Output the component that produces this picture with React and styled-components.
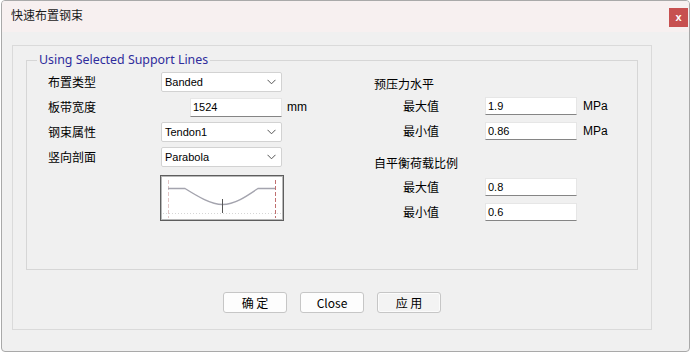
import React from 'react';
import styled, { createGlobalStyle } from 'styled-components';

const Global = createGlobalStyle`
  html, body { margin: 0; padding: 0; background: #ffffff; }
  body { font-family: "Noto Sans CJK SC", "Noto Sans", sans-serif; color: #000; }
`;

const Window = styled.div`
  box-sizing: border-box;
  margin-left: 1px;
  width: 689px;
  height: 352px;
  border: 1px solid #a9a9a9;
  border-radius: 4px;
  background: #f0f0f0;
  overflow: hidden;
  display: flex;
  flex-direction: column;
`;

const TitleBar = styled.div`
  height: 31px;
  flex: none;
  background: #f7f0f0;
  display: flex;
  justify-content: space-between;
  align-items: flex-start;
  padding-left: 9px;
`;

const TitleText = styled.span`
  margin-top: 6px;
  font: 12px/16px "Noto Sans CJK SC", sans-serif;
  color: #1a1a1a;
`;

const CloseBtn = styled.div`
  margin-top: 7px;
  margin-right: 1px;
  width: 19px;
  height: 19px;
  background: #c75050;
  color: #fff;
  font: bold 11px/18px "Liberation Sans", sans-serif;
  text-align: center;
`;

const Panel = styled.div`
  box-sizing: border-box;
  margin: 13px 0 0 10px;
  width: 640px;
  height: 285px;
  border: 1px solid #dadada;
  padding: 0 13px;
  display: flex;
  flex-direction: column;
`;

const Group = styled.fieldset`
  margin: 6px 0 0 0;
  padding: 0;
  border: 1px solid #d6d6d6;
  min-width: 0;
`;

const Legend = styled.legend`
  margin-left: 10px;
  padding: 0 2px;
  font: 12.4px/16px "Noto Sans", sans-serif;
  color: #2f2c9c;
`;

const GroupBody = styled.div`
  box-sizing: border-box;
  height: 201px;
  padding-left: 21px;
  display: grid;
  grid-template-columns: 326px 1fr;
  align-items: start;
`;

const LeftCol = styled.div`
  padding-top: 4px;
  display: grid;
  grid-template-columns: 113px 121px auto;
  grid-template-rows: repeat(4, 20px) auto;
  row-gap: 5px;
  align-items: center;
`;

const Label = styled.span`
  font: 12px/20px "Noto Sans CJK SC", sans-serif;
  color: #000;
`;

const SelectBox = styled.div`
  box-sizing: border-box;
  height: 20px;
  border: 1px solid #d2d2d2;
  border-radius: 2px;
  background: #fff;
  display: flex;
  align-items: center;
  justify-content: space-between;
  padding: 0 5px 0 3px;
  font: 11px/18px "Liberation Sans", sans-serif;
  color: #000;
`;

const TextBox = styled.div`
  box-sizing: border-box;
  justify-self: ${p => (p.$end ? 'end' : 'start')};
  width: 92px;
  height: ${p => p.$h || 18}px;
  background: #fff;
  border: 1px solid #e6e6e6;
  border-bottom-color: #858585;
  padding: 0 2px;
  display: flex;
  align-items: center;
  font: 11px "Liberation Sans", sans-serif;
  color: #000;
`;

const Unit = styled.span`
  margin-left: ${p => p.$gap || 5}px;
  font: 12px "Liberation Sans", sans-serif;
  color: #000;
`;

const Preview = styled.div`
  grid-column: 2;
  align-self: start;
  margin: 3px 0 0 -1px;
  width: 124px;
  height: 46px;
  box-sizing: border-box;
  border: 1px solid #5e5e5e;
  box-shadow: inset 0 0 0 1px #b8b8b8;
  background: #fff;
`;

const RightCol = styled.div`
  padding-top: 6px;
  display: flex;
  flex-direction: column;
`;

const Heading = styled.div`
  height: 20px;
  margin-top: ${p => p.$mt || 0}px;
  font: 12px/20px "Noto Sans CJK SC", sans-serif;
  color: #000;
`;

const SubRow = styled.div`
  display: flex;
  align-items: center;
  height: 18px;
  margin-top: ${p => p.$mt || 0}px;
  margin-bottom: 7px;
`;

const SubLabel = styled.span`
  box-sizing: border-box;
  width: 111px;
  padding-left: 29px;
  font: 12px/18px "Noto Sans CJK SC", sans-serif;
  color: #000;
`;

const ButtonRow = styled.div`
  margin-top: 22px;
  display: flex;
  justify-content: center;
  gap: 13px;
`;

const Button = styled.div`
  box-sizing: border-box;
  width: 64px;
  height: 21px;
  border: 1px solid #c6c6c6;
  border-radius: 3px;
  background: ${p => (p.$alt ? '#f3f3f3' : '#fdfdfd')};
  box-shadow: ${p => (p.$alt ? 'inset 0 0 0 1px #fbfbfb' : 'none')};
  display: flex;
  align-items: center;
  justify-content: center;
  font: 12px/19px "Noto Sans CJK SC", "Noto Sans", sans-serif;
  color: #000;
  white-space: pre;
`;

const Chevron = () => (
  <svg width="9" height="6" viewBox="0 0 9 6">
    <path d="M0.5 0.8 L4.5 4.8 L8.5 0.8" fill="none" stroke="#555" strokeWidth="1" />
  </svg>
);

const Select = ({ value }) => (
  <SelectBox>
    <span>{value}</span>
    <Chevron />
  </SelectBox>
);

const ProfileDrawing = () => (
  <svg width="122" height="44" viewBox="0 0 122 44">
    <line x1="2" y1="37.5" x2="120" y2="37.5" stroke="#d6d6d6" strokeWidth="1" strokeDasharray="1 2" />
    <line x1="7.5" y1="4" x2="7.5" y2="42" stroke="#e2c6c6" strokeWidth="1" strokeDasharray="4 2" />
    <line x1="114.5" y1="4" x2="114.5" y2="42" stroke="#c07070" strokeWidth="1" strokeDasharray="4 2" />
    <path
      d="M7 12.5 L24 12.5 C36 20 50 28.5 61.5 28.5 C74 28.5 86 20 97 12.5 L114 12.5"
      fill="none"
      stroke="#a4a4ae"
      strokeWidth="1.4"
    />
    <line x1="61.5" y1="23" x2="61.5" y2="37" stroke="#555" strokeWidth="1" />
  </svg>
);

export default function App() {
  return (
    <>
      <Global />
      <Window>
        <TitleBar>
          <TitleText>快速布置钢束</TitleText>
          <CloseBtn>x</CloseBtn>
        </TitleBar>
        <Panel>
          <Group>
            <Legend>Using Selected Support Lines</Legend>
            <GroupBody>
              <LeftCol>
                <Label>布置类型</Label>
                <Select value="Banded" />
                <span />
                <Label>板带宽度</Label>
                <TextBox $end $h={19}>1524</TextBox>
                <Unit>mm</Unit>
                <Label>钢束属性</Label>
                <Select value="Tendon1" />
                <span />
                <Label>竖向剖面</Label>
                <Select value="Parabola" />
                <span />
                <Preview>
                  <ProfileDrawing />
                </Preview>
              </LeftCol>
              <RightCol>
                <Heading>预压力水平</Heading>
                <SubRow $mt={3}>
                  <SubLabel>最大值</SubLabel>
                  <TextBox>1.9</TextBox>
                  <Unit $gap={6}>MPa</Unit>
                </SubRow>
                <SubRow>
                  <SubLabel>最小值</SubLabel>
                  <TextBox>0.86</TextBox>
                  <Unit $gap={6}>MPa</Unit>
                </SubRow>
                <Heading $mt={6}>自平衡荷载比例</Heading>
                <SubRow $mt={5}>
                  <SubLabel>最大值</SubLabel>
                  <TextBox>0.8</TextBox>
                </SubRow>
                <SubRow>
                  <SubLabel>最小值</SubLabel>
                  <TextBox>0.6</TextBox>
                </SubRow>
              </RightCol>
            </GroupBody>
          </Group>
          <ButtonRow>
            <Button>确 定</Button>
            <Button>Close</Button>
            <Button $alt>应 用</Button>
          </ButtonRow>
        </Panel>
      </Window>
    </>
  );
}
